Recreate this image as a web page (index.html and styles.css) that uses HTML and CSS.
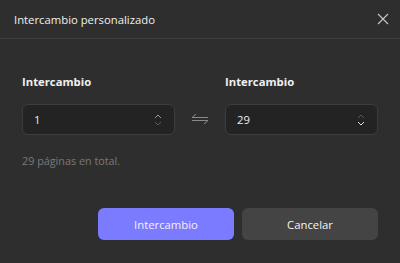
FILE: index.html
```html
<!DOCTYPE html>
<html lang="es">
<head>
<meta charset="utf-8">
<link rel="stylesheet" href="styles.css">
</head>
<body>
<div class="dialog">
  <div class="header">
    <span class="title">Intercambio personalizado</span>
    <svg class="close" width="12" height="12" viewBox="0 0 12 12"><path d="M1 1L11 11M11 1L1 11" stroke="#c8c8c8" stroke-width="1.1" fill="none"/></svg>
  </div>
  <div class="body">
    <div class="fields">
      <div class="field">
        <div class="label">Intercambio</div>
        <div class="input">
          <span class="value">1</span>
          <svg class="spin" width="8" height="14" viewBox="0 0 8 14"><path d="M1 5L4 2L7 5" stroke="#9a9a9a" stroke-width="1" fill="none"/><path d="M1 9L4 12L7 9" stroke="#5a5a5a" stroke-width="1" fill="none"/></svg>
        </div>
      </div>
      <svg class="swap" width="18" height="12" viewBox="0 0 18 12"><path d="M1 4.5H17M1 4.5L5 1M17 7.5H1M17 7.5L13 11" stroke="#8a8a8a" stroke-width="1" fill="none"/></svg>
      <div class="field">
        <div class="label">Intercambio</div>
        <div class="input">
          <span class="value">29</span>
          <svg class="spin" width="8" height="14" viewBox="0 0 8 14"><path d="M1 5L4 2L7 5" stroke="#5a5a5a" stroke-width="1" fill="none"/><path d="M1 9L4 12L7 9" stroke="#e0e0e0" stroke-width="1" fill="none"/></svg>
        </div>
      </div>
    </div>
    <div class="total">29 páginas en total.</div>
    <div class="actions">
      <button class="btn primary">Intercambio</button>
      <button class="btn secondary">Cancelar</button>
    </div>
  </div>
</div>
</body>
</html>
```
FILE: styles.css
```css
html, body {
  margin: 0;
  padding: 0;
  background: #2e2e2e;
}
body {
  font-family: "Open Sans", "Noto Sans", sans-serif;
  color: #e8e8e8;
  width: 400px;
  height: 263px;
  overflow: hidden;
}
.dialog {
  width: 400px;
  height: 263px;
  display: flex;
  flex-direction: column;
}
.header {
  height: 39px;
  border-bottom: 1px solid #3c3c3c;
  display: flex;
  align-items: center;
  justify-content: space-between;
  padding: 0 11px 0 14px;
  box-sizing: border-box;
}
.title {
  font-size: 11.3px;
  color: #f0f0f0;
}
.close {
  display: block;
}
.body {
  padding: 0 22px 0 22px;
  display: flex;
  flex-direction: column;
}
.fields {
  display: flex;
  align-items: flex-end;
  margin-top: 34px;
}
.field {
  width: 153px;
  display: flex;
  flex-direction: column;
}
.label {
  font-size: 11.3px;
  font-weight: 700;
  color: #f0f0f0;
  line-height: 17px;
  margin-bottom: 14px;
}
.input {
  height: 31px;
  box-sizing: border-box;
  background: #232323;
  border: 1px solid #3d3d3d;
  border-radius: 6px;
  display: flex;
  align-items: center;
  justify-content: space-between;
  padding: 0 12px 0 11px;
}
.value {
  font-size: 11.3px;
  color: #ececec;
}
.swap {
  margin: 0 16px 10px 16px;
  display: block;
}
.total {
  font-size: 10.8px;
  color: #7a7a7a;
  margin-top: 18px;
  line-height: 15px;
}
.actions {
  display: flex;
  justify-content: flex-end;
  gap: 8px;
  margin-top: 40px;
}
.btn {
  width: 136px;
  height: 32px;
  border: none;
  border-radius: 6px;
  font-family: "Open Sans", "Noto Sans", sans-serif;
  font-size: 11.3px;
  color: #f4f4f4;
  cursor: pointer;
}
.primary {
  background: #7b7bff;
}
.secondary {
  background: #444444;
}
```
